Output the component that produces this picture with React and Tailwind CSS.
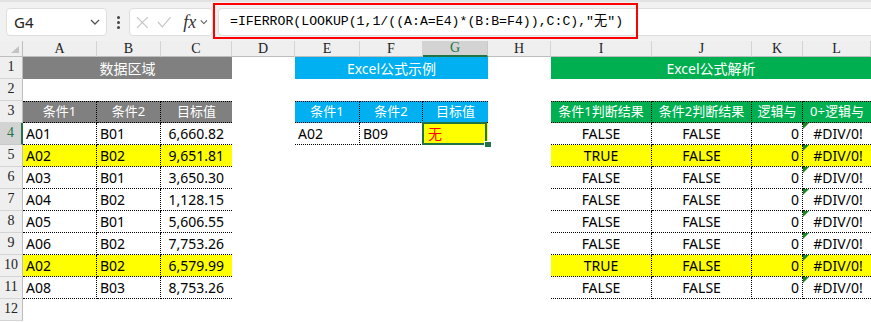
import React from "react";

const COL_LETTERS = ["A", "B", "C", "D", "E", "F", "G", "H", "I", "J", "K", "L"];

const leftData = [
  ["A01", "B01", "6,660.82"],
  ["A02", "B02", "9,651.81"],
  ["A03", "B01", "3,650.30"],
  ["A04", "B02", "1,128.15"],
  ["A05", "B01", "5,606.55"],
  ["A06", "B02", "7,753.26"],
  ["A02", "B02", "6,579.99"],
  ["A08", "B03", "8,753.26"],
];

// rows 5 and 10 are the matching pairs
const hitRows = [5, 10];

function Cell({ className = "", children }) {
  return (
    <div className={"relative flex items-center overflow-hidden whitespace-nowrap " + className}>
      {children}
    </div>
  );
}

function RowHead({ n, active }) {
  if (active) {
    return (
      <div className="flex items-end justify-center pb-[1px] bg-[#d3d3d3] border-r-2 border-r-[#217346] border-b border-b-[#c9c9c9] text-[#217346] font-['Liberation_Serif',serif] text-[14px]">
        {n}
      </div>
    );
  }
  return (
    <div className="flex items-end justify-center pb-[1px] bg-[#efefef] border-r border-r-[#bdbdbd] border-b border-b-[#d4d4d4] text-[#222] font-['Liberation_Serif',serif] text-[14px]">
      {n}
    </div>
  );
}

function ErrFlag() {
  return (
    <span className="absolute left-0 top-0 w-0 h-0 border-t-[6px] border-t-[#15871d] border-r-[6px] border-r-transparent" />
  );
}

function buildRows() {
  const out = [];
  for (let r = 1; r <= 12; r++) {
    out.push(<RowHead key={"h" + r} n={r} active={r === 4} />);

    if (r === 1) {
      out.push(
        <Cell key="a1" className="col-span-3 justify-center bg-[#808080] text-white text-[14px]">数据区域</Cell>,
        <Cell key="d1" />,
        <Cell key="e1" className="col-span-3 justify-center bg-[#00b0f0] text-white text-[14px]">Excel公式示例</Cell>,
        <Cell key="h1" />,
        <Cell key="i1" className="col-span-4 justify-center bg-[#00b050] text-white text-[14px]">Excel公式解析</Cell>
      );
      continue;
    }
    if (r === 2 || r === 12) {
      for (let c = 0; c < 12; c++) out.push(<Cell key={r + "-" + c} />);
      continue;
    }
    if (r === 3) {
      out.push(
        <Cell key="a3" className="justify-center bg-[#808080] text-white text-[13px] border-t border-b border-r border-dotted border-black">条件1</Cell>,
        <Cell key="b3" className="justify-center bg-[#808080] text-white text-[13px] border-t border-b border-r border-dotted border-black">条件2</Cell>,
        <Cell key="c3" className="justify-center bg-[#808080] text-white text-[13px] border-t border-b border-dotted border-black">目标值</Cell>,
        <Cell key="d3" />,
        <Cell key="e3" className="justify-center bg-[#00b0f0] text-white text-[13px] border-t border-b border-r border-dotted border-black">条件1</Cell>,
        <Cell key="f3" className="justify-center bg-[#00b0f0] text-white text-[13px] border-t border-b border-r border-dotted border-black">条件2</Cell>,
        <Cell key="g3" className="justify-center bg-[#00b0f0] text-white text-[13px] border-t border-b border-dotted border-black">目标值</Cell>,
        <Cell key="h3" />,
        <Cell key="i3" className="justify-center bg-[#00b050] text-white text-[13px] border-t border-b border-r border-dotted border-black">条件1判断结果</Cell>,
        <Cell key="j3" className="justify-center bg-[#00b050] text-white text-[13px] border-t border-b border-r border-dotted border-black">条件2判断结果</Cell>,
        <Cell key="k3" className="justify-center bg-[#00b050] text-white text-[13px] border-t border-b border-r border-dotted border-black">逻辑与</Cell>,
        <Cell key="l3" className="justify-center bg-[#00b050] text-white text-[13px] border-t border-b border-dotted border-black">0÷逻辑与</Cell>
      );
      continue;
    }

    const [a, b, c] = leftData[r - 4];
    const hit = hitRows.includes(r);
    const fill = hit ? " bg-[#ffff00]" : "";

    out.push(
      <Cell key={"a" + r} className={"pl-[3px] border-b border-r border-dotted border-black" + fill}>{a}</Cell>,
      <Cell key={"b" + r} className={"pl-[3px] border-b border-r border-dotted border-black" + fill}>{b}</Cell>,
      <Cell key={"c" + r} className={"justify-end pr-[8px] border-b border-dotted border-black" + fill}>{c}</Cell>,
      <Cell key={"d" + r} />
    );

    if (r === 4) {
      out.push(
        <Cell key="e4" className="pl-[3px] border-b border-r border-dotted border-black">A02</Cell>,
        <Cell key="f4" className="pl-[3px] border-b border-r border-dotted border-black">B09</Cell>,
        <div key="g4" className="relative">
          <div className="absolute inset-0 flex items-center pl-[5px] bg-[#ffff00] text-[#ff0000] border-b border-dotted border-black">无</div>
          <div className="absolute -left-[1px] -top-[1px] right-[1px] bottom-0 border-2 border-[#217346]" />
          <div className="absolute -right-[4px] -bottom-[3px] w-[8px] h-[7px] bg-[#217346] border border-white" />
        </div>
      );
    } else {
      out.push(<Cell key={"e" + r} />, <Cell key={"f" + r} />, <Cell key={"g" + r} />);
    }

    out.push(
      <Cell key={"h" + r} />,
      <Cell key={"i" + r} className={"justify-center border-b border-r border-dotted border-black" + fill}>{hit ? "TRUE" : "FALSE"}</Cell>,
      <Cell key={"j" + r} className={"justify-center border-b border-r border-dotted border-black" + fill}>FALSE</Cell>,
      <Cell key={"k" + r} className={"justify-end pr-[3px] border-b border-r border-dotted border-black" + fill}>0</Cell>,
      <Cell key={"l" + r} className={"justify-center pl-[2px] border-b border-dotted border-black" + fill}>
        <ErrFlag />
        #DIV/0!
      </Cell>
    );
  }
  return out;
}

function Chevron({ className = "" }) {
  return (
    <svg width="10" height="6" viewBox="0 0 10 6" className={className}>
      <polyline points="1,1 5,5 9,1" fill="none" stroke="#555" strokeWidth="1.3" />
    </svg>
  );
}

function FormulaBar() {
  return (
    <div className="relative h-[41px] bg-[#f1f1f1] border-t-2 border-t-[#e2e2e2] flex items-start pt-[6px] pl-[6px]">
      <div className="w-[101px] h-[28px] rounded-[4px] border border-[#dedede] bg-white flex items-center justify-between pl-[7px] pr-[6px] text-[15px] text-[#222] font-['Noto_Sans',sans-serif]">
        <span>G4</span>
        <Chevron />
      </div>
      <div className="w-[22px] h-[28px] flex flex-col items-center justify-center gap-[2px]">
        <span className="w-[3px] h-[3px] bg-[#444] rounded-full" />
        <span className="w-[3px] h-[3px] bg-[#444] rounded-full" />
        <span className="w-[3px] h-[3px] bg-[#444] rounded-full" />
      </div>
      <div className="w-[84px] h-[28px] rounded-[4px] border border-[#dedede] bg-white flex items-center pl-[6px] pr-[4px]">
        <svg width="13" height="13" viewBox="0 0 13 13">
          <path d="M1 1 L12 12 M12 1 L1 12" stroke="#c4c4c4" strokeWidth="1.2" fill="none" />
        </svg>
        <svg width="15" height="12" viewBox="0 0 15 12" className="ml-[8px]">
          <polyline points="1,6 5.5,11 14,1" stroke="#c4c4c4" strokeWidth="1.2" fill="none" />
        </svg>
        <span className="ml-[12px] font-['Liberation_Serif',serif] italic text-[18px] leading-none text-[#333]">fx</span>
        <Chevron className="ml-[4px] w-[8px]" />
      </div>
      <div className="flex-1 ml-[5px] h-[28px] rounded-l-[4px] border border-r-0 border-[#dedede] bg-white flex items-center pl-[11px] font-['Liberation_Mono','Noto_Sans_CJK_SC',monospace] text-[13.2px] text-black">
        =IFERROR(LOOKUP(1,1/((A:A=E4)*(B:B=F4)),C:C),"无")
      </div>
      <div className="absolute left-[213px] top-[1px] w-[425px] h-[36px] border-2 border-[#ff0000] pointer-events-none" />
    </div>
  );
}

export default function App() {
  return (
    <div className="w-[871px] h-[322px] overflow-hidden bg-white">
      <FormulaBar />
      <div className="grid grid-cols-[23px_74px_64px_71px_63px_65px_63px_65px_63px_101px_100px_51px_68px] grid-rows-[16px_repeat(12,22px)] font-['Noto_Sans','Noto_Sans_CJK_SC',sans-serif] text-[14px] text-black">
        <div className="relative bg-[#efefef] border-r border-r-[#bdbdbd] border-b border-b-[#bdbdbd]">
          <span className="absolute right-[3px] bottom-[3px] w-0 h-0 border-l-[8px] border-l-transparent border-b-[7px] border-b-[#c3c3c3]" />
        </div>
        {COL_LETTERS.map((l) =>
          l === "G" ? (
            <div key={l} className="flex items-center justify-center bg-[#d3d3d3] border-b-2 border-b-[#217346] border-r border-r-[#c9c9c9] text-[#217346] font-['Liberation_Serif',serif] text-[14px] leading-none">
              {l}
            </div>
          ) : (
            <div key={l} className="flex items-center justify-center bg-[#efefef] border-b border-b-[#bdbdbd] border-r border-r-[#d4d4d4] text-[#222] font-['Liberation_Serif',serif] text-[14px] leading-none">
              {l}
            </div>
          )
        )}
        {buildRows()}
      </div>
    </div>
  );
}
